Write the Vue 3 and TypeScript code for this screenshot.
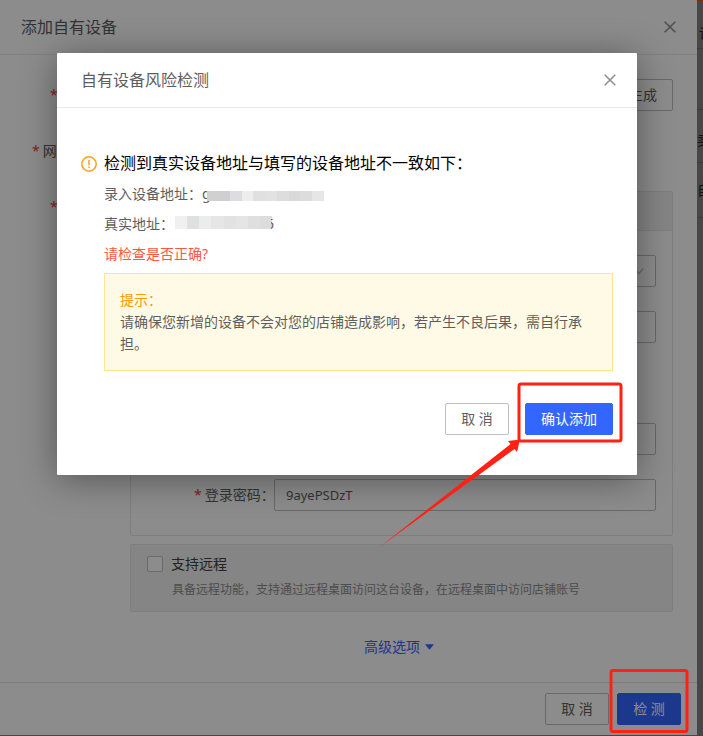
<script setup lang="ts">
import { ref } from 'vue'

const password = ref('9ayePSDzT')
const remote = ref(false)
const fields = ref(['', ''])

const entered = ['#d0d0d0', '#cfcfd1', '#dcdde0', '#ededed', '#e0e0e0', '#e2e2e2', '#dddddd', '#d9d9db', '#dcdcdc', '#e6e6e6']
const actual = ['#f0f0f0', '#dfe1e1', '#ebecec', '#e6e6e6', '#e2e2e2', '#e5e5e5', '#dfdfdf', '#dcdcdc']
</script>

<template>
  <div class="page">
    <main class="drawer">
      <header class="bar">
        <h1>添加自有设备</h1>
        <button class="close" type="button" aria-label="关闭">
          <svg viewBox="0 0 12 12"><path d="M.7.7l10.6 10.6M11.3.7L.7 11.3" /></svg>
        </button>
      </header>

      <form class="body" @submit.prevent>
        <div class="row">
          <span class="side near"><i>*</i></span>
          <button class="btn generate" type="button">生成</button>
        </div>
        <div class="row">
          <span class="side far"><i>*</i>网</span>
        </div>
        <div class="row top">
          <span class="side near first"><i>*</i></span>
          <section class="panel">
            <div class="panel-head"></div>
            <div class="panel-body">
              <div class="field">
                <div class="select-box">
                  <select aria-label="类型"></select>
                  <svg viewBox="0 0 12 8"><path d="M1 1l5 6 5-6" /></svg>
                </div>
              </div>
              <div class="field"><input v-model="fields[0]" type="text" aria-label="地址" /></div>
              <div class="field"></div>
              <div class="field"><input v-model="fields[1]" type="text" aria-label="账号" /></div>
              <div class="field">
                <label for="pwd"><i>*</i>登录密码：</label>
                <input id="pwd" v-model="password" type="text" />
              </div>
            </div>
          </section>
        </div>
        <section class="remote">
          <label><input v-model="remote" type="checkbox" />支持远程</label>
          <p>具备远程功能，支持通过远程桌面访问这台设备，在远程桌面中访问店铺账号</p>
        </section>
        <div class="more">
          <a href="#">高级选项<svg viewBox="0 0 10 6"><path d="M0 0h10L5 6z" /></svg></a>
        </div>
      </form>

      <footer class="actions">
        <button class="btn" type="button">取 消</button>
        <button class="btn primary" type="button">检 测</button>
      </footer>
    </main>

    <aside class="behind">
      <span class="accent"></span>
      <span class="cell one">设</span>
      <span class="cell two"></span>
      <span class="cell three">卖</span>
      <span class="cell four">自</span>
    </aside>

    <div class="overlay">
      <section class="dialog" role="dialog" aria-labelledby="dialog-title">
        <header class="bar dialog-bar">
          <h2 id="dialog-title">自有设备风险检测</h2>
          <button class="close" type="button" aria-label="关闭">
            <svg viewBox="0 0 12 12"><path d="M.7.7l10.6 10.6M11.3.7L.7 11.3" /></svg>
          </button>
        </header>
        <div class="dialog-body">
          <svg class="warn" viewBox="0 0 16 16">
            <circle cx="8" cy="8" r="7.2" />
            <path d="M8 4v5.2M8 10.6v1.5" />
          </svg>
          <div class="message">
            <h3>检测到真实设备地址与填写的设备地址不一致如下：</h3>
            <p>
              录入设备地址：<span>g</span>
              <span class="mosaic entered"><b v-for="(c, i) in entered" :key="i" :style="{ background: c }"></b></span>
            </p>
            <p>
              真实地址：
              <span class="mosaic actual"><b v-for="(c, i) in actual" :key="i" :style="{ background: c }"></b></span>
              <span class="tail">6</span>
            </p>
            <p class="danger">请检查是否正确?</p>
            <div class="tip">
              <strong>提示：</strong>
              请确保您新增的设备不会对您的店铺造成影响，若产生不良后果，需自行承担。
            </div>
          </div>
        </div>
        <footer class="dialog-actions">
          <button class="btn" type="button">取 消</button>
          <button class="btn primary" type="button">确认添加</button>
        </footer>
      </section>
    </div>

    <svg class="marks" width="703" height="736" viewBox="0 0 703 736">
      <rect x="519" y="384" width="102" height="57" rx="2" />
      <rect x="611" y="670.5" width="76" height="61" rx="2" />
      <path d="M379 547.500L510.500 444L508 441L520 439.500L517 452L514.500 449Z" />
    </svg>
  </div>
</template>

<style>
body {
  margin: 0;
}
</style>

<style scoped>
* {
  box-sizing: border-box;
}
.page {
  position: relative;
  display: flex;
  min-height: 100vh;
  padding-bottom: 1px;
  overflow: hidden;
  background: #828282;
  color: #5e5e5e;
  font: 14px/22px "Noto Sans", "Noto Sans CJK SC", sans-serif;
}
h1, h2, h3, p {
  margin: 0;
  font-weight: 400;
}
h1, h2, h3 {
  font-size: 16px;
  line-height: 24px;
}
button, input, select {
  font: inherit;
  color: inherit;
}
i {
  margin-right: 3px;
  color: #e8403c;
  font-style: normal;
}
.drawer {
  display: flex;
  flex: 1;
  flex-direction: column;
  min-width: 0;
  background: #fff;
}
.bar {
  display: flex;
  align-items: center;
  justify-content: space-between;
  height: 55px;
  padding: 0 21px;
  border-bottom: 1px solid #e8e8e8;
}
.close {
  display: flex;
  padding: 0;
  border: 0;
  background: none;
}
.close svg {
  width: 12px;
  height: 12px;
  fill: none;
  stroke: #8c8c8c;
  stroke-width: 1.5;
}
.body {
  flex: 1;
  padding: 24px 24px 0 0;
}
.row {
  display: flex;
  align-items: center;
  height: 32px;
  margin-bottom: 24px;
}
.top {
  align-items: flex-start;
  height: auto;
  margin-bottom: 8px;
}
.side {
  flex: none;
  width: 130px;
}
.near {
  padding-left: 50px;
}
.far {
  padding-left: 32px;
}
.first {
  padding-top: 5px;
}
.btn {
  min-width: 64px;
  height: 32px;
  padding: 0 15px;
  border: 1px solid #bfbfbf;
  border-radius: 2px;
  background: #fff;
  white-space: pre;
}
.primary {
  border-color: #3366ff;
  background: #3366ff;
  color: #fff;
}
.generate {
  min-width: 0;
  margin-left: auto;
}
.panel {
  flex: 1;
  border: 1px solid #e5e5e5;
  border-radius: 2px;
}
.panel-head {
  height: 39px;
  border-bottom: 1px solid #e5e5e5;
  background: #f2f2f2;
}
.panel-body {
  display: grid;
  gap: 24px;
  padding: 24px 16px 24px 0;
}
.field {
  display: flex;
  align-items: center;
  height: 32px;
  padding-left: 143px;
}
.field label {
  flex: none;
  width: 143px;
  margin-left: -143px;
  padding-left: 63px;
  white-space: nowrap;
}
.field input, .select-box {
  flex: 1;
  min-width: 0;
  height: 32px;
  padding: 0 11px;
  border: 1px solid #bfbfbf;
  border-radius: 2px;
  background: #fff;
  font-size: 13px;
}
.select-box {
  display: flex;
  align-items: center;
}
.select-box select {
  flex: 1;
  border: 0;
  background: none;
  appearance: none;
}
.select-box svg {
  width: 10px;
  height: 8px;
  fill: none;
  stroke: #bfbfbf;
  stroke-width: 1.5;
}
.remote {
  margin-left: 130px;
  padding: 7px 16px 8px;
  border: 1px solid #e5e5e5;
  border-radius: 2px;
  background: #f2f2f2;
}
.remote label {
  display: flex;
  align-items: center;
  gap: 8px;
  height: 24px;
  color: #404040;
}
.remote input {
  width: 16px;
  height: 16px;
  margin: 0;
  border: 1px solid #bfbfbf;
  border-radius: 2px;
  background: #fff;
  appearance: none;
}
.remote p {
  padding: 3px 0 2px 25px;
  color: #8c8c8c;
  font-size: 12px;
}
.more {
  margin-left: 130px;
  padding: 24px 5px 24px 0;
  text-align: center;
}
.more a {
  color: #3366ff;
  text-decoration: none;
}
.more svg {
  width: 9px;
  height: 6px;
  margin: 0 0 2px 5px;
  fill: #3366ff;
}
.actions {
  display: flex;
  justify-content: flex-end;
  gap: 8px;
  padding: 10px 16px;
  border-top: 1px solid #e0e0e0;
}
.behind {
  flex: none;
  width: 6px;
  overflow: hidden;
  background: #828282;
  color: #222;
}
.behind span {
  display: flex;
  align-items: center;
  border-bottom: 1px solid #6b6b6b;
}
.behind .accent {
  height: 1px;
  border: 0;
  background: #f05010;
}
.one {
  height: 48px;
  padding: 16px 0 0 2px;
}
.two {
  height: 61px;
}
.three {
  height: 53px;
  padding-top: 8px;
}
.four {
  height: 55px;
}
.overlay {
  position: absolute;
  inset: 0;
  padding: 53px 66px 0 57px;
  background: rgba(0, 0, 0, 0.45);
}
.dialog {
  border-radius: 1px;
  background: #fff;
  box-shadow: 0 4px 36px rgba(0, 0, 0, 0.4);
}
.dialog-bar {
  padding: 0 21px 0 24px;
}
.dialog-body {
  display: flex;
  gap: 7px;
  padding: 43px 24px 32px;
}
.warn {
  flex: none;
  width: 16px;
  height: 16px;
  margin-top: 5px;
  fill: none;
  stroke: #ff9f1a;
  stroke-width: 1.5;
}
.message {
  flex: 1;
  min-width: 0;
}
h3 {
  margin-bottom: 4px;
  color: #000;
}
.message p {
  display: flex;
  align-items: center;
  height: 30px;
}
.mosaic {
  display: flex;
}
.mosaic b {
  flex: 1;
}
.entered {
  width: 117px;
  height: 10px;
  margin: 4px 0 0 -4px;
}
.actual {
  width: 97px;
  height: 13px;
  margin: -4px 0 0 1px;
}
.tail {
  margin-left: -6px;
  clip-path: inset(0 0 0 5px);
}
.message .danger {
  color: #ff5545;
}
.tip {
  margin-top: 4px;
  padding: 15px;
  border: 1px solid #ffe58f;
  background: #fffae6;
}
.tip strong {
  display: block;
  color: #ff9900;
  font-weight: 400;
}
.dialog-actions {
  display: flex;
  justify-content: flex-end;
  gap: 16px;
  padding: 0 24px 40px;
}
.marks {
  position: absolute;
  top: 0;
  left: 0;
  pointer-events: none;
}
.marks rect {
  fill: none;
  stroke: #ff2214;
  stroke-width: 3;
}
.marks path {
  fill: #ff2214;
}
</style>
